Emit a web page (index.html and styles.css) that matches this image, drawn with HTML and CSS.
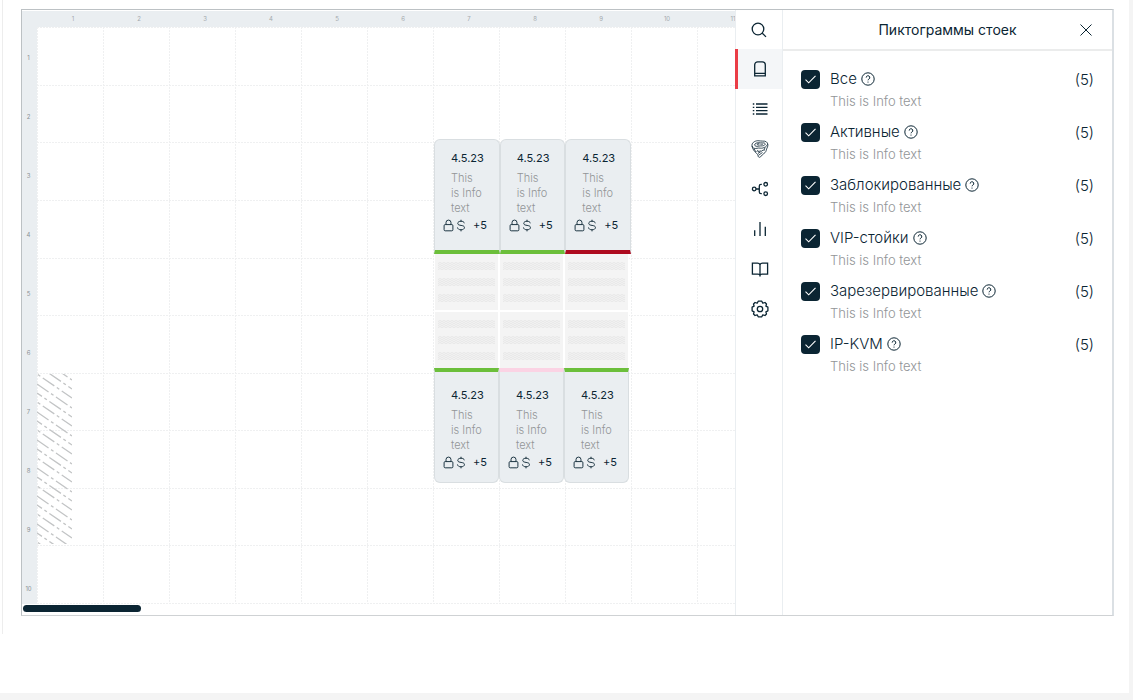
FILE: index.html
```
<!DOCTYPE html>
<html lang="ru">
<head>
<meta charset="utf-8">
<meta name="viewport" content="width=device-width, initial-scale=1">
<title>Пиктограммы стоек</title>
<link rel="stylesheet" href="styles.css">
</head>
<body>
<svg class="sprite" aria-hidden="true">
  <defs>
    <pattern id="mesh" width="4" height="4" patternUnits="userSpaceOnUse">
      <path d="M0 1.5L2 .5L4 1.5M0 3.5L2 2.5L4 3.5" fill="none" stroke="#e2e2e2" stroke-width=".8"/>
    </pattern>
    <symbol id="lock" viewBox="0 0 12 14">
      <rect x="1.2" y="6" width="9.6" height="6.8" rx="1.2"/>
      <path d="M3.3 6V3.8a2.7 2.7 0 0 1 5.4 0V6"/>
    </symbol>
    <symbol id="dollar" viewBox="0 0 10 14">
      <path d="M5 .8v1.800M5 11.500v1.800M8.600 4.600C8.400 3.200 7 2.400 5 2.400c-2 0-3.500.9-3.500 2.300C1.500 8 8.700 5.800 8.700 9.200c0 1.500-1.500 2.400-3.700 2.400s-3.600-.9-3.800-2.500"/>
    </symbol>
    <symbol id="help" viewBox="0 0 14 14">
      <circle cx="7" cy="7" r="6.2"/>
      <path d="M5.200 5.600a1.800 1.800 0 1 1 2.700 1.500c-.7.400-.9.700-.9 1.200M7 9.600v1"/>
    </symbol>
    <symbol id="slots" viewBox="0 0 57 40">
      <path d="M0 0h57v8H0zM0 16h57v8H0zM0 32h57v8H0z" fill="url(#mesh)" stroke="none"/>
    </symbol>
  </defs>
</svg>

<div class="page">
  <main class="content">
    <div class="frame">
      <section class="plan" aria-label="План">
        <div class="ruler-x"><span>1</span><span>2</span><span>3</span><span>4</span><span>5</span><span>6</span><span>7</span><span>8</span><span>9</span><span>10</span><span>11</span></div>
        <div class="plan-body">
          <div class="ruler-y"><span>1</span><span>2</span><span>3</span><span>4</span><span>5</span><span>6</span><span>7</span><span>8</span><span>9</span><span>10</span></div>
          <div class="canvas">
            <svg class="grid" aria-hidden="true">
              <defs>
                <pattern id="cell" width="66" height="577" patternUnits="userSpaceOnUse">
                  <path d="M.5 0V577" stroke="#eff0f1" stroke-dasharray="2 1"/>
                  <path d="M0 .5H66M0 58.500H66M0 115.500H66M0 173.500H66M0 231.500H66M0 288.500H66M0 346.500H66M0 403.500H66M0 461.500H66M0 518.500H66M0 576.500H66" stroke="#eff0f1" stroke-dasharray="2 1"/>
                </pattern>
              </defs>
              <rect width="100%" height="100%" fill="url(#cell)" stroke="none"/>
            </svg>
            <svg class="hatch" viewBox="0 0 35 170" aria-hidden="true">
              <defs>
                <pattern id="hatching" width="35" height="56" patternUnits="userSpaceOnUse">
                  <g stroke="#c2c4c5" stroke-width="1.300" fill="none">
                    <path stroke-dasharray="14 3 3 3" d="M0-18L35 6M0 10L35 34M0 38L35 62"/>
                    <path stroke-dasharray="14 3 3 3" stroke-dashoffset="8" d="M0-9L35 15M0 19L35 43M0 47L35 71"/>
                    <path stroke-dasharray="14 3 3 3" stroke-dashoffset="16" d="M0 0L35 24M0 28L35 52M0 56L35 80M0-28L35-4"/>
                  </g>
                </pattern>
              </defs>
              <rect width="35" height="170" fill="url(#hatching)" stroke="none"/>
            </svg>
            <div class="racks">
              <div class="rack-row rack-row-top">
                <article class="rack"><h3>4.5.23</h3><p>This<br>is Info<br>text</p><div class="marks"><svg class="lock"><use href="#lock"/></svg><svg class="dollar"><use href="#dollar"/></svg><span>+5</span></div></article>
                <article class="rack"><h3>4.5.23</h3><p>This<br>is Info<br>text</p><div class="marks"><svg class="lock"><use href="#lock"/></svg><svg class="dollar"><use href="#dollar"/></svg><span>+5</span></div></article>
                <article class="rack busy"><h3>4.5.23</h3><p>This<br>is Info<br>text</p><div class="marks"><svg class="lock"><use href="#lock"/></svg><svg class="dollar"><use href="#dollar"/></svg><span>+5</span></div></article>
              </div>
              <div class="tiles">
                <svg class="tile"><use href="#slots"/></svg><svg class="tile"><use href="#slots"/></svg><svg class="tile"><use href="#slots"/></svg>
                <svg class="tile"><use href="#slots"/></svg><svg class="tile"><use href="#slots"/></svg><svg class="tile"><use href="#slots"/></svg>
              </div>
              <div class="rack-row rack-row-bottom">
                <article class="rack"><h3>4.5.23</h3><p>This<br>is Info<br>text</p><div class="marks"><svg class="lock"><use href="#lock"/></svg><svg class="dollar"><use href="#dollar"/></svg><span>+5</span></div></article>
                <article class="rack reserved"><h3>4.5.23</h3><p>This<br>is Info<br>text</p><div class="marks"><svg class="lock"><use href="#lock"/></svg><svg class="dollar"><use href="#dollar"/></svg><span>+5</span></div></article>
                <article class="rack"><h3>4.5.23</h3><p>This<br>is Info<br>text</p><div class="marks"><svg class="lock"><use href="#lock"/></svg><svg class="dollar"><use href="#dollar"/></svg><span>+5</span></div></article>
              </div>
            </div>
          </div>
        </div>
        <div class="scroll"><div class="scroll-thumb"></div></div>
      </section>

      <nav class="tools" aria-label="Инструменты">
        <button type="button" aria-label="Поиск"><svg viewBox="0 0 18 18"><circle cx="7" cy="8" r="5.800"/><path d="M11.300 12.200L15 15.900"/></svg></button>
        <button type="button" class="active" aria-label="Стойки"><svg viewBox="0 0 18 18"><path d="M3.700 15.800V4.800a3 3 0 0 1 3-3h4.600a3 3 0 0 1 3 3v11zM3.700 13.300h10.600"/></svg></button>
        <button type="button" aria-label="Список"><svg viewBox="0 0 18 18"><path d="M5 4h11.500M5 7.300h11.500M5 10.700h11.500M5 14h11.500M1.800 4h1.500M1.800 7.300h1.500M1.800 10.700h1.500M1.800 14h1.500"/></svg></button>
        <button type="button" aria-label="Кабели"><svg class="fine" viewBox="0 0 18 18"><path d="M1 6C.5 3.200 3.200.9 6.800.7c2-.1 2.900.6 4.900.4 2.900-.3 5 1.100 5.200 3.500.2 2-.8 2.900-1.300 4.500-.5 1.900-.8 3.300-2.700 4.400-1.300.8-2.100 2-3.400 3.400-.8.8-2 .5-2.300-.5-.4-1.300-.4-2.100-1.600-3.100C3.200 11.500 1.600 9 1 6zM1 6c.5 2 2.500 3 5 2.300 2.600-.7 3.700.3 5.900-.3 2.200-.7 3.800-1.600 4.800-3.800"/><path d="M3.600 5c.1-1.500 1.900-2.300 4-2.300 1.700 0 2.500.4 4.100.2 1.500-.2 2.500.3 2.600 1.400-.8 1.100-1.800 1.400-3 1.600-1.500.2-2.700-.2-4.300.3C5.500 6.600 3.900 6.200 3.600 5zM8.300 3.600c-1-.4-2.100 0-2 .7.100.6 1.200.7 2 .3M10 3.700v1.200M11.600 3.700l-.6 1.200"/><path d="M3.200 8.800l1.500 3M5.500 11.500l1.500-1 .5 1.500 2-1.500M7 13.500l5.500-3.700M7.500 15.300l4-2.800M14 7.500l-1.200 3.500"/></svg></button>
        <button type="button" aria-label="Связи"><svg viewBox="0 0 18 18"><circle cx="3.200" cy="9" r="1.800"/><circle cx="14.700" cy="4.300" r="1.800"/><circle cx="14.700" cy="13.700" r="1.800"/><path d="M5 9h3.300M10.800 4.300H10A1.700 1.700 0 0 0 8.300 6v6A1.700 1.700 0 0 0 10 13.700h.8"/></svg></button>
        <button type="button" aria-label="Статистика"><svg viewBox="0 0 18 18"><path d="M3.700 10.300V16M9 2v14M14.300 6.700V16"/></svg></button>
        <button type="button" aria-label="Справочник"><svg viewBox="0 0 18 18"><path d="M9 4.700C8.600 3.600 7.800 3.200 6.500 3.200H1.400v10.900h5.700c1.100 0 1.600.3 1.900 1.100.3-.8.800-1.100 1.900-1.100h5.700V3.200h-5.100C10.200 3.200 9.400 3.600 9 4.700zM9 4.700v11.700"/></svg></button>
        <button type="button" aria-label="Настройки"><svg viewBox="0 0 18 18"><circle cx="9" cy="9" r="2.700"/><path d="M7.200 1.200h3.600l1 2 2.200-.7 1.500 1.500-.6 2.200 2 1v3.600l-2 1 .6 2.200-1.500 1.500-2.200-.7-1 2H7.200l-1-2-2.200.7L2.500 14l.6-2.200-2-1V7.200l2-1L2.500 4 4 2.500l2.200.7z" stroke-linejoin="round"/></svg></button>
      </nav>

      <aside class="panel">
        <header class="panel-head">
          <h2>Пиктограммы стоек</h2>
          <button type="button" class="close" aria-label="Закрыть"><svg viewBox="0 0 14 14"><path d="M1.500 1.500L12.500 12.500M12.500 1.500L1.500 12.500"/></svg></button>
        </header>
        <ul class="filters">
          <li><input type="checkbox" id="f1" checked><label for="f1">Все</label><svg class="help"><use href="#help"/></svg><span class="count">(5)</span><p>This is Info text</p></li>
          <li><input type="checkbox" id="f2" checked><label for="f2">Активные</label><svg class="help"><use href="#help"/></svg><span class="count">(5)</span><p>This is Info text</p></li>
          <li><input type="checkbox" id="f3" checked><label for="f3">Заблокированные</label><svg class="help"><use href="#help"/></svg><span class="count">(5)</span><p>This is Info text</p></li>
          <li><input type="checkbox" id="f4" checked><label for="f4">VIP-стойки</label><svg class="help"><use href="#help"/></svg><span class="count">(5)</span><p>This is Info text</p></li>
          <li><input type="checkbox" id="f5" checked><label for="f5">Зарезервированные</label><svg class="help"><use href="#help"/></svg><span class="count">(5)</span><p>This is Info text</p></li>
          <li><input type="checkbox" id="f6" checked><label for="f6">IP-KVM</label><svg class="help"><use href="#help"/></svg><span class="count">(5)</span><p>This is Info text</p></li>
        </ul>
      </aside>
    </div>
  </main>
</div>
</body>
</html>
```
FILE: styles.css
```
* {
  box-sizing: border-box;
}

body {
  margin: 0;
  background: #f4f4f4;
  color: #0b2533;
  font-family: Inter, "Noto Sans", sans-serif;
  font-size: 15px;
}

h2, h3, p, ul {
  margin: 0;
  padding: 0;
  font-weight: 400;
}

button {
  margin: 0;
  padding: 0;
  border: 0;
  background: none;
  cursor: pointer;
}

svg {
  display: block;
  fill: none;
  stroke: #0b2533;
}

.sprite {
  position: absolute;
  width: 0;
  height: 0;
}

.page {
  margin-right: 4px;
  padding: 0 0 59px 2px;
  background: #fff;
}

.content {
  padding: 9px 15px 18px 18px;
  border-left: 1px solid #ededed;
}

.frame {
  display: flex;
  border: 1px solid #bcc1c4;
  border-right: 2px solid #dbe0e4;
  border-bottom-color: #cfd2d4;
}

.plan {
  flex: 1;
  min-width: 0;
  display: flex;
  flex-direction: column;
  padding-top: 1px;
}

.ruler-x {
  display: flex;
  overflow: hidden;
  height: 16px;
  padding-left: 18px;
  background: #eaeef1;
}

.ruler-x span,
.ruler-y span {
  color: #a3a9ad;
  font-size: 6px;
  text-align: center;
}

.ruler-x span {
  flex: 0 0 66px;
  line-height: 16px;
}

.plan-body {
  display: flex;
}

.ruler-y {
  flex: 0 0 15px;
  display: flex;
  flex-direction: column;
  padding-right: 2px;
  background: #eaeef1;
}

.ruler-y span {
  height: 59px;
  padding-top: 27px;
  line-height: 8px;
  color: #8b9195;
}

.ruler-y span:last-child {
  height: 46px;
}

.canvas {
  position: relative;
  flex: 1;
  min-width: 0;
  overflow: hidden;
}

.grid {
  position: absolute;
  width: 100%;
  height: 100%;
}

.hatch {
  position: absolute;
  left: 0;
  top: 347px;
  width: 35px;
  height: 170px;
}

.racks {
  position: absolute;
  left: 397px;
  top: 112px;
}

.rack-row {
  display: grid;
  grid-template-columns: repeat(3, 1fr);
}

.rack-row-top {
  width: 197px;
}

.rack-row-bottom {
  width: 195px;
}

.rack {
  height: 115px;
  padding: 11px 8px 0;
  border: 1px solid #d9dee1;
  background: #eaeef1;
}

.rack-row-top .rack {
  border-bottom: 4px solid #6cbf3b;
  border-radius: 6px 6px 0 0;
}

.rack-row-bottom .rack {
  padding-top: 16px;
  border-top: 4px solid #6cbf3b;
  border-radius: 0 0 6px 6px;
}

.rack-row-top .busy {
  border-bottom-color: #ae0b1f;
}

.rack-row-bottom .reserved {
  border-top-color: #fbd3e4;
}

.rack h3,
.rack p {
  padding-left: 8px;
  font-size: 11px;
  line-height: 15px;
}

.rack p {
  margin-top: 5px;
  color: #929597;
  font-weight: 300;
}

.marks {
  display: flex;
  align-items: center;
  gap: 2px;
  height: 18px;
  font-size: 11px;
}

.marks span {
  margin-left: 5px;
}

.lock {
  width: 11px;
  height: 13px;
}

.dollar {
  width: 10px;
  height: 13px;
}

.tiles {
  display: grid;
  grid-template-columns: repeat(3, 63px);
  gap: 2px;
  width: 195px;
  padding: 0 1px;
  background: #fff;
}

.tile {
  width: 63px;
  height: 56px;
  padding: 8px 3px;
  background: #f4f4f4;
}

.scroll {
  padding: 1px 1px 3px;
}

.scroll-thumb {
  width: 118px;
  height: 7px;
  border-radius: 4px;
  background: #0b2533;
}

.tools {
  flex: 0 0 48px;
  display: flex;
  flex-direction: column;
  border: solid #eaeef1;
  border-width: 0 1px;
}

.tools button {
  display: grid;
  place-items: center;
  height: 40px;
  padding-left: 2px;
}

.tools button:first-child {
  height: 39px;
}

.tools .active {
  margin-left: -1px;
  padding-left: 0;
  border-left: 3px solid #ea3d46;
  background: #f4f6f8;
}

.tools svg {
  width: 18px;
  height: 18px;
  stroke-width: 1.3;
}

.tools .fine {
  stroke-width: 0.8;
}

.panel {
  flex: 0 0 329px;
}

.panel-head {
  display: grid;
  grid-template-columns: 18px 1fr 18px;
  align-items: center;
  height: 41px;
  padding: 0 17px;
  border-bottom: 2px solid #ebecec;
}

.panel-head h2 {
  grid-column: 2;
  font-size: 14px;
  text-align: center;
}

.close svg {
  width: 14px;
  height: 14px;
  margin: 0 auto;
}

.filters {
  display: grid;
  gap: 9px;
  padding: 16px 18px;
  list-style: none;
}

.filters li {
  display: grid;
  grid-template-columns: 19px auto 14px 1fr;
  align-items: center;
}

.filters input {
  appearance: none;
  width: 19px;
  height: 19px;
  margin: 0;
  border-radius: 4px;
  background: #0b2533 url("data:image/svg+xml,%3Csvg xmlns='http://www.w3.org/2000/svg' viewBox='0 0 19 19' fill='none' stroke='white' stroke-width='1.1'%3E%3Cpath d='M4.500 9.700L7.700 12.800L14.500 5.800'/%3E%3C/svg%3E");
}

.filters label {
  margin-left: 10px;
  font-size: 15px;
  font-weight: 300;
  line-height: 24px;
}

.help {
  width: 14px;
  height: 14px;
  margin-left: 4px;
  overflow: visible;
}

.count {
  justify-self: end;
  font-weight: 300;
}

.filters p {
  grid-column: 2 / -1;
  margin-left: 10px;
  color: #929597;
  font-size: 13px;
  font-weight: 300;
  line-height: 20px;
}
```
